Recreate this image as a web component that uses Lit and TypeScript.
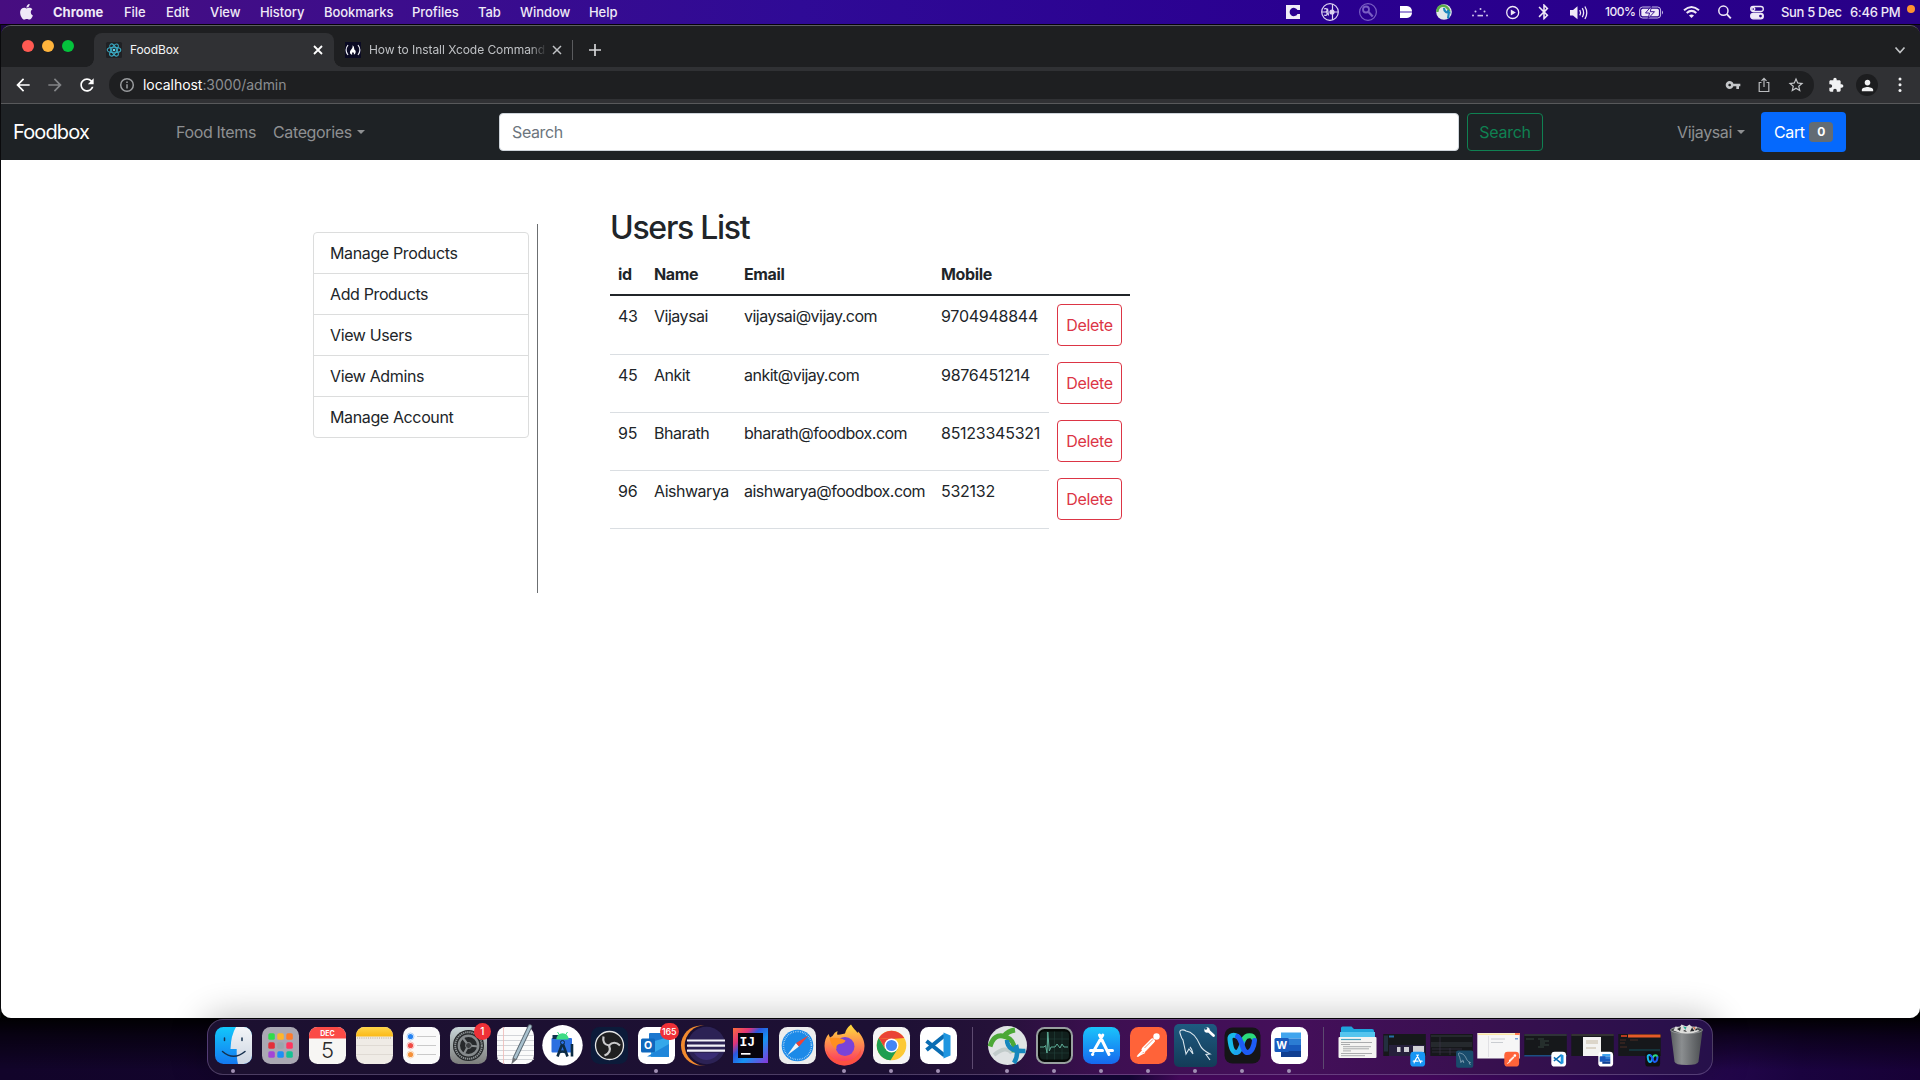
import { LitElement, html, svg, css } from "lit";
import { customElement } from "lit/decorators.js";

const P = {
  apple: "M12.152 6.896c-.948 0-2.415-1.078-3.96-1.04-2.04.027-3.91 1.183-4.961 3.014-2.117 3.675-.546 9.103 1.519 12.09 1.013 1.454 2.208 3.09 3.792 3.039 1.52-.065 2.09-.987 3.935-.987 1.831 0 2.35.987 3.96.948 1.637-.026 2.676-1.48 3.676-2.948 1.156-1.688 1.636-3.325 1.662-3.415-.039-.013-3.182-1.221-3.22-4.857-.026-3.04 2.48-4.494 2.597-4.559-1.429-2.09-3.623-2.324-4.39-2.376-2-.156-3.675 1.09-4.61 1.09zM15.53 3.83c.843-1.012 1.4-2.427 1.245-3.83-1.207.052-2.662.805-3.532 1.818-.78.896-1.454 2.338-1.273 3.714 1.338.104 2.715-.688 3.559-1.701",
  back: "M20 11H7.83l5.59-5.59L12 4l-8 8 8 8 1.41-1.41L7.83 13H20v-2z",
  forward: "M12 4l-1.41 1.41L16.17 11H4v2h12.17l-5.58 5.59L12 20l8-8z",
  reload: "M17.65 6.35C16.2 4.9 14.21 4 12 4c-4.42 0-7.99 3.58-7.99 8s3.57 8 7.99 8c3.73 0 6.84-2.55 7.73-6h-2.08c-.82 2.33-3.04 4-5.65 4-3.31 0-6-2.69-6-6s2.69-6 6-6c1.66 0 3.14.69 4.22 1.78L13 11h7V4l-2.35 2.35z",
  key: "M12.65 10C11.83 7.67 9.61 6 7 6c-3.31 0-6 2.69-6 6s2.69 6 6 6c2.61 0 4.83-1.67 5.65-4H17v4h4v-4h2v-4H12.65zM7 14c-1.1 0-2-.9-2-2s.9-2 2-2 2 .9 2 2-.9 2-2 2z",
  star: "M22 9.24l-7.19-.62L12 2 9.19 8.63 2 9.24l5.46 4.73L5.82 21 12 17.27 18.18 21l-1.63-7.03L22 9.24zM12 15.4l-3.76 2.27 1-4.28-3.32-2.88 4.38-.38L12 6.1l1.71 4.04 4.38.38-3.32 2.88 1 4.28L12 15.4z",
  puzzle: "M20.5 11H19V7c0-1.1-.9-2-2-2h-4V3.5C13 2.12 11.88 1 10.5 1S8 2.12 8 3.5V5H4c-1.1 0-1.99.9-1.99 2v3.8H3.5c1.49 0 2.7 1.21 2.7 2.7s-1.21 2.7-2.7 2.7H2V20c0 1.1.9 2 2 2h3.8v-1.5c0-1.49 1.21-2.7 2.7-2.7 1.49 0 2.7 1.21 2.7 2.7V22H17c1.1 0 2-.9 2-2v-4h1.5c1.38 0 2.5-1.12 2.5-2.5S21.88 11 20.5 11z",
  person: "M12 12c2.21 0 4-1.79 4-4s-1.79-4-4-4-4 1.79-4 4 1.79 4 4 4zm0 2c-2.67 0-8 1.34-8 4v2h16v-2c0-2.66-5.33-4-8-4z",
  bluetooth: "M17.71 7.71L12 2h-1v7.59L6.41 5 5 6.41 10.59 12 5 17.59 6.41 19 11 14.41V22h1l5.71-5.71-4.3-4.29 4.3-4.29zM13 5.83l1.88 1.88L13 9.59V5.83zm1.88 10.46L13 18.17v-3.76l1.88 1.88z",
};

const icon = (d: string, size: number) =>
  html`<svg class="ic" width=${size} height=${size} viewBox="0 0 24 24" fill="currentColor"><path d=${d}></path></svg>`;

/* ---------- macOS menu bar ---------- */
@customElement("mac-menubar")
class MacMenubar extends LitElement {
  static styles = css`
    :host {
      display: flex;
      justify-content: space-between;
      height: 24px;
      box-sizing: border-box;
      padding: 0 5px 0 20px;
      background: linear-gradient(90deg, #470d80 0, #3c0d8c 400px, #2f0a96 800px, #2a0090 1300px, #280087 1920px);
      color: #efe9f7;
      font: 500 13px/24px Inter, "Liberation Sans", sans-serif;
      letter-spacing: -0.06px;
      white-space: nowrap;
    }
    .left {
      display: grid;
      grid-template-columns: 33px 71px 42px 44px 50px 64px 88px 66px 42px 69px 60px;
    }
    .right {
      display: grid;
      grid-template-columns: 35px 38px 41px 36px 36px 34px 33px 31px 35px 34px 44px 35px 32px 31px 69px 57px 8px;
    }
    .bold { font-weight: 700; letter-spacing: 0; }
    .pct { font-size: 12px; letter-spacing: -0.5px; }
    .date { letter-spacing: -0.32px; }
    svg { display: block; overflow: visible; }
  `;
  render() {
    return html`
      <div class="left">
        <svg width="13" height="23" viewBox="2 0 20 34" fill="#efe9f7"><path transform="translate(0 5.5)" d=${P.apple}></path></svg>
        <span class="bold">Chrome</span>
        ${["File", "Edit", "View", "History", "Bookmarks", "Profiles", "Tab", "Window", "Help"].map((m) => html`<span>${m}</span>`)}
      </div>
      <div class="right">
        <svg width="14" height="24"><path fill="#f0edf8" d="M0 5h14v5h-2.500a4.200 4.200 0 1 0 0 4H14V19H0z"></path></svg>
        <svg width="18" height="24" fill="none" stroke="#ddd3f2" stroke-width="1.200"><circle cx="9" cy="12" r="8.300"></circle><path d="M11.500 4v16M9 12h8M3 9c3-1.500 4.500 2 1.500 3 3 1 1.500 4.500-1.500 3M1 12h3M6.500 8.500l1 7"></path><circle cx="11" cy="12" r="2" fill="#ddd3f2"></circle></svg>
        <svg width="18" height="24" fill="none" stroke="#7a5fc4" stroke-width="1.200"><circle cx="9" cy="12" r="8.400"></circle><circle cx="7" cy="9.500" r="3" stroke-width="1.800"></circle><path stroke-width="2.200" d="M9.500 12l4.200 4.500"></path></svg>
        <svg width="12" height="24" fill="#fff"><path d="M0 6h7q4.500.3 5 5H0zM0 13h12q-.5 4.500-5 5H0z"></path><path fill="#a18fd6" d="M0 11h12v2H0z"></path></svg>
        <svg width="16" height="24"><circle cx="8" cy="12" r="7.800" fill="#e3e8ea"></circle><path d="M1.300 12C1.500 7 5 4.500 10 6.500c2 1.500 3 3 3.500 5" fill="none" stroke="#5cae4a" stroke-width="2.400"></path><path d="M8 8c0 4 3 5 6.500 4.500M12 18.500q1.500-4 0-8.500" fill="none" stroke="#1c86bd" stroke-width="2.200"></path></svg>
        <svg width="16" height="24" fill="#cfc4ec"><circle cx="1" cy="15.500" r="1"></circle><circle cx="3.500" cy="11.500" r="1"></circle><circle cx="8.500" cy="9" r="1"></circle><circle cx="12.500" cy="11.500" r="1"></circle><circle cx="15" cy="15.500" r="1"></circle><path d="M5.500 14.800h5.500v1.600H5.500z"></path></svg>
        <svg width="14" height="24"><circle cx="6.700" cy="12.500" r="6" fill="none" stroke="#efe9f7" stroke-width="1.300"></circle><path fill="#efe9f7" d="M4.800 9.500l5 3-5 3z"></path></svg>
        <svg width="10" height="24" viewBox="5 0 14 33.600" fill="#efe9f7"><path transform="translate(-1.200 3.500) scale(1.100)" d=${P.bluetooth}></path></svg>
        <svg width="18" height="24" fill="none" stroke="#efe9f7" stroke-width="1.300"><path fill="#efe9f7" stroke="none" d="M0 10h3l4.500-3.800v13L3 15.500H0z"></path><path d="M9.800 10q1.500 2.700 0 5.400M12.300 8.200q2.600 4.500 0 9M14.900 6.500q3.700 6.200 0 12.500"></path></svg>
        <span class="pct">100%</span>
        <svg width="25" height="24"><rect x=".6" y="7" width="21" height="11" rx="3" fill="none" stroke="#c9bde8"></rect><rect x="2.300" y="8.700" width="17.600" height="7.600" rx="1.500" fill="#efe9f7"></rect><path d="M12.500 6L6.500 13h4l-1.300 5.500L15.500 11.700h-4.200z" fill="#efe9f7" stroke="#290089" stroke-width=".9"></path><path d="M23 10.500q2 2 0 4z" fill="#c9bde8"></path></svg>
        <svg width="17" height="24" fill="none" stroke="#efe9f7" stroke-width="2"><path d="M1 10.200q7.500-6.500 15 0M3.700 13q4.800-4.200 9.600 0"></path><path fill="#efe9f7" stroke="none" d="M8.500 18l-2.500-2.600q2.500-1.800 5 0z"></path></svg>
        <svg width="13" height="24" fill="none" stroke="#efe9f7" stroke-width="1.500"><circle cx="5.400" cy="10.700" r="4.600"></circle><path d="M8.800 14.200l4 4.200" stroke-width="1.900"></path></svg>
        <svg width="14" height="24" fill="none" stroke="#efe9f7" stroke-width="1.300"><rect x=".7" y="6.500" width="12.600" height="5" rx="2.500"></rect><circle cx="3.300" cy="9" r="1.500"></circle><rect x=".7" y="13.500" width="12.600" height="5.300" rx="2.600" fill="#efe9f7"></rect><circle cx="10.500" cy="16.100" r="1.400" fill="#290089" stroke="none"></circle></svg>
        <span class="date">Sun 5 Dec</span>
        <span class="date">6:46 PM</span>
        <svg width="8" height="24"><circle cx="4" cy="9" r="4" fill="#ff9230"></circle></svg>
      </div>
    `;
  }
}

/* ---------- Chrome tab strip and toolbar ---------- */
@customElement("browser-bars")
class BrowserBars extends LitElement {
  static styles = css`
    :host {
      display: block;
      font-family: Inter, "Liberation Sans", sans-serif;
      color: #fff;
      border-bottom: 1px solid #58595b;
    }
    svg { display: block; flex: none; overflow: visible; }
    .strip {
      display: flex;
      height: 41px;
      padding: 0 15px 0 21px;
      background: #1e1f21;
      align-items: flex-end;
      font-size: 12px;
    }
    .lights { display: flex; gap: 8px; padding-bottom: 15px; width: 72px; }
    .light { width: 12px; height: 12px; border-radius: 50%; }
    .red { background: #ff5a52; }
    .amber { background: #ffb43c; }
    .green { background: #04c33c; }
    .tab {
      display: flex;
      align-items: center;
      box-sizing: border-box;
      height: 34px;
      width: 240px;
      padding: 0 12px;
      gap: 8px;
      border-radius: 8px 8px 0 0;
      color: #bfc1c4;
    }
    .tab.active { background: #303134; color: #f4f4f5; position: relative; }
    .tab.active::before,
    .tab.active::after {
      content: "";
      position: absolute;
      bottom: 0;
      width: 8px;
      height: 8px;
    }
    .tab.active::before { left: -8px; background: radial-gradient(circle at 0 0, transparent 7.5px, #303134 8px); }
    .tab.active::after { right: -8px; background: radial-gradient(circle at 100% 0, transparent 7.5px, #303134 8px); }
    .title { flex: 1; letter-spacing: -0.1px; overflow: hidden; white-space: nowrap; line-height: 16px; }
    .tab.idle { width: 238px; padding: 0 11px; }
    .fade {
      -webkit-mask-image: linear-gradient(90deg, #000 160px, transparent 178px);
      mask-image: linear-gradient(90deg, #000 160px, transparent 178px);
      letter-spacing: -0.06px;
      margin-right: -3px;
    }
    .sep { width: 1px; height: 20px; background: #5a5b5e; margin-bottom: 7px; }
    .plus { margin: 0 auto 11px 16px; }
    .chev { margin-bottom: 12px; }
    .bar {
      display: flex;
      align-items: center;
      height: 36px;
      background: #303134;
      padding: 0 17px 0 12px;
    }
    .nav { display: flex; gap: 12px; width: 96px; }
    .dim { color: #828487; }
    .omni {
      display: flex;
      align-items: center;
      flex: 1;
      height: 28px;
      border-radius: 14px;
      background: #1e1f21;
      padding: 0 9px 0 11px;
      font-size: 14px;
      color: #8b8d90;
    }
    .url { margin-left: 9px; flex: 1; letter-spacing: -0.05px; line-height: 20px; }
    .host { color: #fff; }
    .acts { display: flex; gap: 15px; color: #c4c6c9; align-items: center; }
    .ext { display: flex; align-items: center; margin-left: 14px; color: #f1f2f3; }
    .avatar {
      width: 22px;
      height: 22px;
      border-radius: 50%;
      background: #1c1d1f;
      display: grid;
      place-items: center;
      margin: 0 19px 0 12px;
    }
  `;
  render() {
    return html`
      <div class="strip">
        <div class="lights"><i class="light red"></i><i class="light amber"></i><i class="light green"></i></div>
        <div class="tab active">
          <svg width="16" height="16" viewBox="0 0 16 16"><rect width="16" height="16" rx="1.500" fill="#202124"></rect><g fill="none" stroke="#3aa9c2" stroke-width="1.100"><ellipse cx="8" cy="8" rx="6.800" ry="2.700"></ellipse><ellipse cx="8" cy="8" rx="6.800" ry="2.700" transform="rotate(60 8 8)"></ellipse><ellipse cx="8" cy="8" rx="6.800" ry="2.700" transform="rotate(120 8 8)"></ellipse></g><circle cx="8" cy="8" r="1.300" fill="#5fd6ee"></circle></svg>
          <span class="title">FoodBox</span>
          <svg width="8" height="8" stroke="#fff" stroke-width="1.800"><path d="M0 0l8 8M8 0l-8 8"></path></svg>
        </div>
        <div class="tab idle">
          <svg width="16" height="16" viewBox="0 0 16 16"><rect width="16" height="16" fill="#0a0a23"></rect><g fill="none" stroke="#e8e8f0" stroke-width="1.200"><path d="M3 3q-3.800 5 0 10M13 3q3.800 5 0 10"></path></g><path fill="#fff" d="M7.500 3.200C10 5 8.500 7 10 8c1 1 1.200 3.500-1.200 4.800.5-1 0-2-.8-2.800-.9.800-1.200 1.700-.7 2.800C4.500 12 4.500 9.800 5.800 8 7 6.500 8 5.500 7.500 3.200z"></path></svg>
          <span class="title fade">How to Install Xcode Command</span>
          <svg width="8" height="8" stroke="#bfc1c4" stroke-width="1.500"><path d="M0 0l8 8M8 0l-8 8"></path></svg>
        </div>
        <div class="sep"></div>
        <svg class="plus" width="12" height="12" stroke="#d5d6d8" stroke-width="1.700"><path d="M6 0v12M0 6h12"></path></svg>
        <svg class="chev" width="10" height="10" fill="none" stroke="#c0c2c4" stroke-width="1.700"><path d="M0.500 2.500l4.500 5 4.500-5"></path></svg>
      </div>
      <div class="bar">
        <div class="nav">${icon(P.back, 20)}<span class="dim">${icon(P.forward, 20)}</span>${icon(P.reload, 20)}</div>
        <div class="omni">
          <svg width="14" height="14" fill="none" stroke="#9a9c9f" stroke-width="1.500"><circle cx="7" cy="7" r="6.300"></circle><path d="M7 6.200v4.300M7 3.500v1.600"></path></svg>
          <span class="url"><span class="host">localhost</span>:3000/admin</span>
          <div class="acts">
            ${icon(P.key, 16)}
            <svg width="16" height="16" fill="none" stroke="#b9bbbe" stroke-width="1.200"><path d="M5.500 5.500H3.200v9h9.600v-9h-2.300M8 10V1.500M5.500 3.800L8 1.300l2.500 2.500"></path></svg>
            ${icon(P.star, 18)}
          </div>
        </div>
        <div class="ext">
          ${icon(P.puzzle, 16)}
          <div class="avatar">${icon(P.person, 17)}</div>
          <svg width="6" height="16" fill="#f1f2f3"><circle cx="3" cy="2" r="1.500"></circle><circle cx="3" cy="7.700" r="1.500"></circle><circle cx="3" cy="13.400" r="1.500"></circle></svg>
        </div>
      </div>
    `;
  }
}

/* ---------- The Foodbox admin page ---------- */
interface User { id: number; name: string; email: string; mobile: string; }

const users: User[] = [
  { id: 43, name: "Vijaysai", email: "vijaysai@vijay.com", mobile: "9704948844" },
  { id: 45, name: "Ankit", email: "ankit@vijay.com", mobile: "9876451214" },
  { id: 95, name: "Bharath", email: "bharath@foodbox.com", mobile: "85123345321" },
  { id: 96, name: "Aishwarya", email: "aishwarya@foodbox.com", mobile: "532132" },
];

@customElement("foodbox-page")
class FoodboxPage extends LitElement {
  static styles = css`
    :host {
      display: flex;
      flex-direction: column;
      background: #fff;
      color: #212529;
      font: 400 16px/24px Inter, "Liberation Sans", sans-serif;
      letter-spacing: -0.37px;
    }
    .nav {
      display: grid;
      grid-template-columns: 163px 97px 226px 960px 76px 1fr;
      column-gap: 0;
      align-items: center;
      height: 56px;
      background: #1e2225;
      padding: 0 74px 0 12px;
      color: #8e9092;
      white-space: nowrap;
      box-sizing: border-box;
    }
    .brand { color: #fff; font-size: 20px; letter-spacing: -0.85px; }
    .drop { display: flex; align-items: center; gap: 5px; }
    .caret { border: 4.8px solid transparent; border-top-color: currentColor; border-bottom: 0; }
    .input {
      height: 38px;
      box-sizing: border-box;
      background: #fff;
      border: 1px solid #ced4da;
      border-radius: 4px;
      padding: 6px 12px;
      color: #6c757d;
    }
    .btn {
      box-sizing: border-box;
      height: 38px;
      border: 1px solid #0f8152;
      border-radius: 4px;
      color: #0f8152;
      text-align: center;
      letter-spacing: -0.26px;
      line-height: 37px;
      margin-left: 8px;
      width: 76px;
    }
    .right { display: flex; justify-content: flex-end; align-items: center; gap: 16px; }
    .cart {
      display: flex;
      align-items: center;
      box-sizing: border-box;
      width: 85px;
      height: 40px;
      padding: 0 13px;
      justify-content: space-between;
      background: #0569fd;
      border-radius: 4px;
      color: #fff;
    }
    .badge {
      width: 24px;
      height: 20px;
      border-radius: 4px;
      background: #636c74;
      font: 700 12px/20px Inter, sans-serif;
      text-align: center;
    }
    .main { display: flex; padding: 48px 0 0 312px; flex: 1; align-items: flex-start; }
    .menu {
      box-sizing: border-box;
      width: 216px;
      margin-top: 24px;
      border: 1px solid #dcdddd;
      border-radius: 4px;
    }
    .entry { padding: 8px 16px; border-bottom: 1px solid #dcdddd; }
    .entry:last-child { border-bottom: 0; }
    .rule { width: 1px; height: 369px; background: #6c6f71; margin: 16px 72px 0 8px; }
    h2 { margin: 0 0 7px; font-weight: 500; font-size: 32px; line-height: 40px; letter-spacing: -1.28px; }
    .row {
      display: grid;
      grid-template-columns: 36px 90px 197px 116px 81px;
      height: 58px;
    }
    .row.first { height: 59px; }
    .cell { padding: 8px 0 0 8px; border-bottom: 1px solid #dadee2; box-sizing: border-box; }
    .name { letter-spacing: -0.48px; }
    .email { letter-spacing: -0.52px; }
    .num { letter-spacing: -0.26px; }
    .head { height: 39px; border-bottom: 2px solid #212529; font-weight: 700; }
    .head .cell { border: 0; padding-top: 7px; }
    .act { padding: 7px 8px 0; }
    .first .act { padding-top: 8px; }
    .del {
      display: block;
      box-sizing: border-box;
      width: 65px;
      height: 42px;
      border: 1px solid #dc3545;
      border-radius: 4px;
      color: #dc3545;
      text-align: center;
      line-height: 40px;
      letter-spacing: -0.3px;
    }
  `;
  render() {
    return html`
      <div class="nav">
        <span class="brand">Foodbox</span>
        <span>Food Items</span>
        <span class="drop">Categories<i class="caret"></i></span>
        <div class="input">Search</div>
        <div class="btn">Search</div>
        <div class="right">
          <span class="drop">Vijaysai<i class="caret"></i></span>
          <div class="cart">Cart<span class="badge">0</span></div>
        </div>
      </div>
      <div class="main">
        <div class="menu">
          ${["Manage Products", "Add Products", "View Users", "View Admins", "Manage Account"].map((m) => html`<div class="entry">${m}</div>`)}
        </div>
        <div class="rule"></div>
        <div class="content">
          <h2>Users List</h2>
          <div class="row head">
            <span class="cell">id</span><span class="cell">Name</span><span class="cell">Email</span><span class="cell">Mobile</span>
          </div>
          ${users.map(
            (u, i) => html`<div class="row ${i === 0 ? "first" : ""}">
              <span class="cell num">${u.id}</span><span class="cell name">${u.name}</span><span class="cell email">${u.email}</span>
              <span class="cell num">${u.mobile}</span><span class="act"><span class="del">Delete</span></span>
            </div>`
          )}
        </div>
      </div>
    `;
  }
}

/* ---------- Dock ---------- */
const tile = (fill: string) => svg`<rect x="5" y="5" width="37" height="37" rx="8.500" fill=${fill}></rect>`;
const grad = (id: string, a: string, b: string) =>
  svg`<linearGradient id=${id} x1="0" y1="0" x2="0" y2="1"><stop offset="0" stop-color=${a}></stop><stop offset="1" stop-color=${b}></stop></linearGradient>`;

const appStoreMark = svg`<g stroke="#fff" stroke-width="3" stroke-linecap="round"><path d="M24.800 13L15.500 29.500M21.500 13l9.500 19.500M12.500 28.500h12M30 28.500h4.500M14.500 32.500l.3-.4"></path></g>`;
const vscodeMark = svg`<path fill="none" stroke="#0a6db3" stroke-width="4" stroke-linejoin="round" d="M29.500 13.500L11.500 28M29.500 33.500L11.500 19"></path><path fill="#1f96e0" d="M28.500 10.500l7 3v20l-7 3z"></path>`;
const dolphinMark = svg`<path fill="none" stroke="#dce8ee" stroke-width="1.100" d="M8 11c-1-4 4-3.500 6-2 7 1 11 7 14 14 2 5 6 7 10 9l-4 .5 4 5.500M8 11c1 3 1 5 3 7 1 5 2 9 3 14l3-5 4 5c-1-4-1-5-3-7"></path>`;
const webexMark = svg`<g fill="none" stroke-width="5" stroke-linecap="round"><path stroke="#18b9e8" d="M18.500 14.500c-4-2.500-8-1-7.500 3 .7 7 2.500 13 6 13"></path><path stroke="#1ba4f0" d="M17 30.500c4.500 0 5.500-9 8-13.500"></path><path stroke="#2bdc7c" d="M25 17c2-4 9-4.500 10 0"></path><path stroke="#1d5cf5" d="M18.500 14.500c5 3 4.500 16 10 16 4 0 6.500-6 7-12"></path></g>`;
const postmanMark = svg`<path d="M13.500 33.500L27 19.500" stroke="#fff" stroke-width="2" stroke-linecap="round"></path><path d="M19 27.500L27.500 19" stroke="#fff" stroke-width="5" stroke-linecap="round"></path><path d="M19.500 26L28 17.500M22 29l8-9" stroke="#ff6c37" stroke-width=".8"></path><circle cx="31.500" cy="14.500" r="3.200" fill="#fff"></circle><path d="M12 34.500l8-4" stroke="#fff" stroke-width="1.300"></path>`;
const wordMark = svg`<rect x="15" y="10.500" width="20" height="6" fill="#41a5ee"></rect><rect x="15" y="16.500" width="20" height="6.500" fill="#2b7cd3"></rect><rect x="15" y="23" width="20" height="6" fill="#185abd"></rect><rect x="15" y="29" width="20" height="6" fill="#103f91"></rect><rect x="8.500" y="16" width="14.500" height="14" rx="1.500" fill="#185abd"></rect>`;

const mini = (body: unknown, badge: unknown, light = false) => svg`
  <rect x="2.300" y=${light ? 11 : 12} width="42.500" height=${light ? 25.5 : 22} fill=${light ? "#f6f6f6" : "#16181b"}></rect>
  ${body}<g transform="translate(27.300 27.800) scale(.4)">${badge}</g>`;

interface DockItem { art: unknown; running?: boolean; badge?: string; }

const left: DockItem[] = [
  { running: true, art: svg`<defs>${grad("fi", "#12c7fb", "#1479f0")}${grad("fi2", "#f3f5f8", "#cdd6e2")}</defs>${tile("url(#fi)")}<path fill="url(#fi2)" d="M26 5h7.500a8.500 8.500 0 0 1 8.500 8.500v20a8.500 8.500 0 0 1-8.500 8.500H28q-1.500-6-1.300-15H20.500Q21 13 26 5z"></path><path fill="none" stroke="#15304e" stroke-width="1.500" stroke-linecap="round" d="M12.500 29.500q11 9.500 22.500 0M14.500 16v2.500M32 16v2.500"></path>` },
  { art: svg`${tile("#aaa8b3")}${["#2fdc4a", "#ffb52c", "#ff7a2a", "#e32f3a", "#9ba6ad", "#ff375f", "#a345d6", "#1d8ff5", "#15c193"].map((c, i) => svg`<rect x=${11.3 + (i % 3) * 9} y=${11.3 + Math.floor(i / 3) * 9} width="6.500" height="6.500" rx="1.600" fill=${c}></rect>`)}` },
  { art: svg`${tile("#f7f6f4")}<path fill="#fb4a46" d="M5 16.500v-3A8.500 8.500 0 0 1 13.500 5h20a8.500 8.500 0 0 1 8.500 8.500v3z"></path><text x="23.500" y="13.700" text-anchor="middle" font-size="7" font-weight="700" fill="#fff">DEC</text><text x="23.500" y="35.500" text-anchor="middle" font-size="22" font-weight="300" fill="#2b2b2b">5</text>` },
  { art: svg`<defs>${grad("no", "#ffd54a", "#fbb917")}</defs>${tile("#efebe6")}<path fill="url(#no)" d="M5 14.500v-1A8.500 8.500 0 0 1 13.500 5h20a8.500 8.500 0 0 1 8.500 8.500v1z"></path><path stroke="#d8d2cb" stroke-width=".7" d="M5 23.500h37M5 32.500h37"></path><path stroke="#b5a98f" stroke-dasharray="1 1.200" d="M6 16h35"></path>` },
  { art: svg`${tile("#fafafa")}${["#2583f2", "#f04a45", "#f5913a"].map((c, i) => svg`<circle cx="12.500" cy=${14.5 + i * 9} r="2.600" fill=${c}></circle><circle cx="12.500" cy=${14.5 + i * 9} r="3.500" fill="none" stroke=${c} stroke-width=".5" opacity=".7"></circle><path stroke="#c4c4c4" stroke-width=".9" d="M19 ${14.5 + i * 9}h19"></path>`)}` },
  { badge: "1", art: svg`<defs>${grad("se", "#c9d6d8", "#7c7d7c")}</defs>${tile("url(#se)")}<circle cx="23.500" cy="23.500" r="15.500" fill="#26292b"></circle><circle cx="23.500" cy="23.500" r="13.300" fill="none" stroke="#8b9193" stroke-width="2" stroke-dasharray="1.400 .7"></circle><circle cx="23.500" cy="23.500" r="9.700" fill="none" stroke="#868b8d" stroke-width="2.400"></circle><g stroke="#868b8d" stroke-width="2.200"><path d="M23.500 23.500l10 1M23.500 23.500l-6-8M23.500 23.500l-5 9"></path></g><circle cx="23.500" cy="23.500" r="3" fill="#3a3d3f" stroke="#868b8d"></circle>` },
  { art: svg`${tile("#fbfbfb")}<path stroke="#c9ccd0" stroke-width=".8" d="M5 13.500h37M5 18.500h37M5 23.500h37M5 28.500h37M5 33.500h37M5 37.500h37"></path><path stroke="#efb7b5" stroke-width=".8" d="M11.500 5v37"></path><path stroke="#5d6b75" stroke-width="4.500" stroke-linecap="round" d="M38 4.500L23 36"></path><path stroke="#a9c1ce" stroke-width="2.600" stroke-linecap="round" d="M38 4.500L23 36"></path><path fill="#6b6f73" d="M20.800 35.500l4 2-5.500 5z"></path>` },
  { art: svg`<circle cx="23.500" cy="23.300" r="20.200" fill="#fff"></circle><rect x="12.500" y="16" width="20.500" height="14.500" rx="1" fill="#2c6fe0"></rect><path fill="#11324d" d="M13.500 13h9v4h-9z"></path><path fill="#3ddc84" d="M17.300 17.500a6.200 6.200 0 0 1 12.400 0z"></path><path stroke="#3ddc84" d="M18.500 10l2 3M28.500 10l-2 3"></path><path fill="none" stroke="#0d2c44" stroke-width="2.600" d="M23.500 21L18.500 34.500M23.500 21l5 13.500M33 22v12.500M19.500 31q4-3 8 0"></path><circle cx="23.500" cy="20.500" r="2" fill="#2c6fe0" stroke="#0d2c44"></circle>` },
  { art: svg`<rect x="5" y="5" width="37" height="37" rx="8.500" fill="#0c1b3a"></rect><circle cx="23.500" cy="23.500" r="14" fill="#1f1f21" stroke="#e6e6e6" stroke-width="1.300"></circle><g fill="none" stroke="#c9c9cb" stroke-width="2.200"><path d="M23 23.500q-7-1-5.500-9M23 23.500q5-5.500 11 0M23 23.500q3 7-4.500 10"></path></g>` },
  { running: true, badge: "165", art: svg`${tile("#fff")}<rect x="16" y="11" width="20" height="18" rx="1" fill="#1b77cf"></rect><path fill="#35a8ea" d="M18 20l18-5v20H18z"></path><path fill="#1e86da" d="M14 34.500L36 22v13z"></path><rect x="8" y="16.500" width="14" height="14" rx="1.500" fill="#0f68bd"></rect><text x="15" y="27.300" text-anchor="middle" font-size="10.500" font-weight="700" fill="#fff">O</text>` },
  { art: svg`<circle cx="21" cy="23.500" r="20" fill="#f28a2e"></circle><circle cx="25" cy="23.500" r="20.300" fill="#1b1033"></circle><circle cx="26.500" cy="23.500" r="18.800" fill="#2c2255"></circle><path fill="#3a2d75" d="M14 31h25q-5 7-12.500 7T14 31z"></path><path stroke="#f3f2f8" stroke-width="2.200" d="M7 18.500h38M7 23.700h38M7 28.700h38"></path>` },
  { art: svg`<defs><linearGradient id="ij" x1="0" y1="0" x2="1" y2="1"><stop offset="0" stop-color="#fc6d3a"></stop><stop offset=".25" stop-color="#e0337a"></stop><stop offset=".4" stop-color="#2b57e0"></stop><stop offset=".62" stop-color="#1594f2"></stop><stop offset="1" stop-color="#8a35d8"></stop></linearGradient></defs><rect x="6" y="6" width="35" height="35" fill="url(#ij)"></rect><rect x="11" y="11" width="25" height="25" fill="#07030b"></rect><text x="12.500" y="24" font-size="13" font-weight="700" fill="#fff" class="mono">IJ</text><path fill="#fff" d="M14 31h9.500v1.700H14z"></path>` },
  { art: svg`${tile("#eceded")}<circle cx="23.500" cy="23.500" r="15.800" fill="#1c8ae8"></circle><circle cx="23.500" cy="23.500" r="14" fill="none" stroke="#cde5fa" stroke-width="1.500" stroke-dasharray=".6 1.200"></circle><path fill="#f3f3f3" d="M13 33.500L22 21l3 3.500z"></path><path fill="#ef4136" d="M34.500 13.500L22 21l3 3.500z"></path>` },
  { running: true, art: svg`<defs>${grad("ff", "#ffde3b", "#fb2c66")}</defs><path fill="url(#ff)" d="M30 2.500c2 4 5 5.500 6.500 8.500l.5-1.500c4 4 6.500 9 6.500 14.500a20 19.500 0 0 1-40 0c0-5 1.500-9 4-12l1.500 3.500 2.500-1.500q2-4 5-5l-.5 3.500q3 .5 8-1 1-5 6-9z"></path><circle cx="24" cy="24.500" r="9.500" fill="#7a43d8"></circle><path fill="#ff8f1f" d="M8.500 16q7-1 13 1l3 1.500c-1 3-4 3-6.500 3.500-2 1-3 2-2.500 5-4-2-6-6-7-11z"></path><path fill="#fc5a35" opacity=".75" d="M5 26q4 13 19 13 12-1 16-12 0 15-17 16.500Q7 42 5 26z"></path>` },
  { running: true, art: svg`${tile("#f5f5f5")}<circle cx="23.500" cy="23.500" r="14.800" fill="#fcc934"></circle><path fill="#ea4335" d="M10.700 16.100a14.800 14.800 0 0 1 25.600 0L23.500 17z"></path><path fill="#ea4335" d="M10.700 16.100L17.500 27l6-10z"></path><path fill="#1e9e50" d="M10.700 16.100a14.800 14.800 0 0 0 11.800 22.200L29.500 27H17.200z"></path><circle cx="23.500" cy="23.500" r="7" fill="#fff"></circle><circle cx="23.500" cy="23.500" r="5.600" fill="#4285f4"></circle>` },
  { running: true, art: svg`${tile("#fff")}${vscodeMark}` },
];

const middle: DockItem[] = [
  { running: true, art: svg`<circle cx="23.500" cy="23.500" r="19.500" fill="#dfe3e4"></circle><path fill="none" stroke="#c2cccb" stroke-width="4" d="M10 33q12-10 18-2"></path><path fill="none" stroke="#4ba836" stroke-width="5" d="M6 24.500Q10 11 21 14.500c8 3 10 8 9 16M20 14Q24 9 31 8"></path><path fill="none" stroke="#1687bd" stroke-width="4.500" d="M23 18q0 12 18.500 11M30 41q5-8 2-18"></path>` },
  { running: true, art: svg`<rect x="5" y="5" width="37" height="37" rx="8.500" fill="#98a09f"></rect><rect x="7" y="7" width="33" height="33" rx="6.500" fill="#050807"></rect><rect x="9" y="9.500" width="29" height="28" rx="4" fill="#11201d"></rect><path stroke="#24423b" stroke-width=".6" d="M9 17h29M9 31h29M16 9.500v28M23.500 9.500v28M31 9.500v28"></path><path fill="none" stroke="#5fae98" stroke-width="1" d="M9 25h4l1.500-1.500L16 31l.8-21 1.500 19 1.700-4h4l2-3 3 4 2-4 2 3h4"></path>` },
  { running: true, art: svg`<defs>${grad("as", "#1ac4fb", "#1668ee")}</defs>${tile("url(#as)")}${appStoreMark}` },
  { running: true, art: svg`${tile("#ff6339")}${postmanMark}` },
  { running: true, art: svg`<defs>${grad("my", "#1e5a80", "#133c58")}</defs><rect x="2" y="2" width="43" height="43" rx="5" fill="url(#my)"></rect>${dolphinMark}<path stroke="#fff" stroke-width="2.800" stroke-linecap="round" d="M35.500 8l6 5.500"></path><circle cx="35" cy="8" r="2.700" fill="#fff"></circle><circle cx="33.800" cy="6.500" r="1.300" fill="#1d567b"></circle>` },
  { running: true, art: svg`<rect x="5.500" y="5.500" width="36" height="36" rx="8" fill="#151517"></rect>${webexMark}` },
  { running: true, art: svg`${tile("#fff")}${wordMark}<text x="15.700" y="26.800" text-anchor="middle" font-size="10.500" font-weight="700" fill="#fff">W</text>` },
];

const right: DockItem[] = [
  { art: svg`<path fill="#1fa5dc" d="M7 15V6q0-1.500 1.500-1.500h9L20 7h18q2 0 2 2v6z"></path><path fill="#55c5ee" d="M6 10h35v6H6z"></path><rect x="4.500" y="15" width="38" height="21" rx="1" fill="#f4f4f2"></rect><path stroke="#4ba3bf" stroke-width="1.200" d="M7 17.500h20"></path><path stroke="#a2a4a5" stroke-width=".9" d="M7 20.500h31M7 22.500h9M9 24.700h28M9 26.800h26M9 28.900h8M7 31.500h31M7 33.700h24"></path>` },
  { art: mini(svg`<path fill="#23303f" d="M3 13.500h4v16H3z"></path><path fill="#256fa5" d="M8 13.500h5v2H8z"></path><path fill="#26203c" d="M8 23h36v11H8z"></path><path fill="#cfcfd4" d="M16 25h3.500v5H16zM23 25h5v5h-5zM32 24h11v6H32z"></path>`, svg`${tile("#1796f5")}${appStoreMark}`) },
  { art: mini(svg`<path fill="#25292d" d="M3 13h41v2H3zM3 20h41v5H3z"></path><path stroke="#393347" stroke-width=".7" d="M4 27h30M4 30h30M12 15v18M22 26v7"></path>`, svg`<rect x="2" y="2" width="43" height="43" rx="5" fill="#194c6c"></rect>${dolphinMark}`) },
  { art: mini(svg`<path fill="#fbe7a5" d="M3 11.500h38v1.600H3z"></path><path fill="#ff7c50" d="M40 11h4.800v2H40z"></path><path fill="#dcdce0" d="M13 14h.8v21H13z"></path><path fill="#78a2da" d="M40 16h3v1.500h-3z"></path><path stroke="#bfc3c8" stroke-width=".8" d="M16 17h14M16 20.500h12"></path>`, svg`${tile("#ff6339")}${postmanMark}`, true) },
  { art: mini(svg`<path fill="#2f3338" d="M2.300 12h42.500v2H2.300z"></path><path stroke="#3e5148" stroke-width=".8" d="M4 17h8M16 17h6M18 19h9M18 21h5M18 23h9M16 25h6"></path><path fill="#1b4f83" d="M2.300 33h42.500v1.500H2.300z"></path>`, svg`${tile("#fff")}${vscodeMark}`) },
  { art: mini(svg`<path fill="#333" d="M2.300 12h42.500v2H2.300z"></path><path fill="#f3f3f1" d="M14 15h18v19H14z"></path><path stroke="#b9a98f" stroke-width=".8" d="M17 19h12M17 21h12M17 26h10"></path>`, svg`${tile("#fff")}${wordMark}`) },
  { art: mini(svg`<path fill="#e65a28" d="M12 12.500h32.500v3H12z"></path><path fill="#b8391f" d="M5 13h6v2H5z"></path><path stroke="#5a3327" stroke-width=".8" d="M4 18h6M4 21h5M14 18h8M4 25h7"></path><path fill="#14515d" d="M13 27.500h31v1H13z"></path>`, svg`<rect x="5" y="5" width="37" height="37" rx="8" fill="#101012"></rect>${webexMark}`) },
  { art: svg`<defs><linearGradient id="tr"><stop offset="0" stop-color="#5a5d60"></stop><stop offset=".35" stop-color="#8b8e90"></stop><stop offset="1" stop-color="#4b4e51"></stop></linearGradient></defs><path fill="url(#tr)" d="M7.500 8h32l-4 31.500q-.5 3.500-12 3.500t-12-3.500z"></path><ellipse cx="23.500" cy="8" rx="16" ry="3.500" fill="#44474a" stroke="#a6a9ab" stroke-width=".8"></ellipse><path fill="#dededc" d="M10.500 8.500l2-4 4 1 2-3 5 2 3-2 3 3 4-1 1 3 2 1.500q-6 2.500-13 2.500t-13-3z"></path><path fill="#252729" d="M14 7l3 2 1-4zM27 9.500l2-4 2.500 3.500zM20 9l2-1 2 2zM33 6l2 2-3 .5z"></path><path fill="#2fae9b" d="M20 4.500l3.500.5-1 3z"></path><path fill="#d2643d" d="M30 5l2.500.5-1 2.500z"></path>` },
];

@customElement("mac-dock")
class MacDock extends LitElement {
  static styles = css`
    :host {
      display: flex;
      box-sizing: border-box;
      height: 56px;
      padding: 0 1.5px;
      border: 1px solid rgba(200, 180, 230, 0.28);
      border-radius: 16px;
      background: linear-gradient(90deg, #1c1030 0, #1d1034 45%, #241138 52%, #3e0f52 60%, #440f5a 72%, #38104f 85%, #26104a 100%);
      box-shadow: 0 0 34px 4px rgba(0, 0, 0, 0.24);
    }
    .item { width: 47px; position: relative; padding-top: 2px; }
    svg { display: block; font-family: Inter, "Liberation Sans", sans-serif; overflow: visible; }
    .mono { font-family: "Liberation Mono", monospace; }
    .dot { width: 4px; height: 4px; border-radius: 50%; background: #a190b4; margin: 0 auto; }
    .sep { width: 1px; height: 42px; margin: 7px 10.4px 0; background: #5d4a70; }
    .badge {
      position: absolute;
      top: 3px;
      left: 29px;
      box-sizing: border-box;
      min-width: 17px;
      height: 17px;
      border-radius: 9px;
      background: #ef3037;
      color: #fff;
      font: 500 10px/17px Inter, sans-serif;
      text-align: center;
    }
    .wide { left: 27px; width: 19px; font-size: 9px; letter-spacing: -0.2px; }
  `;
  item(d: DockItem) {
    return html`<div class="item">
      <svg width="47" height="47" viewBox="0 0 47 47">${d.art}</svg>
      ${d.running ? html`<div class="dot"></div>` : ""}
      ${d.badge ? html`<span class="badge ${d.badge.length > 1 ? "wide" : ""}">${d.badge}</span>` : ""}
    </div>`;
  }
  render() {
    return html`${left.map((d) => this.item(d))}<div class="sep"></div>${middle.map((d) => this.item(d))}<div class="sep"></div>${right.map((d) => this.item(d))}`;
  }
}

@customElement("app-root")
class AppRoot extends LitElement {
  static styles = css`
    :host {
      display: flex;
      flex-direction: column;
      width: 1920px;
      height: 1080px;
      overflow: hidden;
      background: #05020a;
    }
    .window {
      display: flex;
      flex-direction: column;
      box-sizing: border-box;
      height: 994px;
      border-left: 1px solid #0a0a0c;
      border-top: 1px solid #050308;
      background: linear-gradient(#1a0640 0, #1a0640 30px, #000 30px);
    }
    .frame {
      display: flex;
      flex-direction: column;
      flex: 1;
      border-radius: 10px;
      overflow: hidden;
      border-top: 1px solid #5e5e63;
      background: #1e1f21;
    }
    foodbox-page { flex: 1; }
    .desk {
      flex: 1;
      display: flex;
      justify-content: center;
      align-items: flex-start;
      padding-top: 1px;
      background:
        linear-gradient(rgba(0, 0, 0, 0.95) 0, rgba(0, 0, 0, 0.55) 18px, rgba(0, 0, 0, 0) 52px),
        linear-gradient(90deg, #12042a 0, #14052e 500px, #16063a 1130px, #4d0a66 1180px, #4d0a68 1420px, #2c0a58 1640px, #1a033f 1800px, #170136 1920px);
    }
  `;
  render() {
    return html`
      <mac-menubar></mac-menubar>
      <div class="window">
        <div class="frame">
          <browser-bars></browser-bars>
          <foodbox-page></foodbox-page>
        </div>
      </div>
      <div class="desk"><mac-dock></mac-dock></div>
    `;
  }
}
